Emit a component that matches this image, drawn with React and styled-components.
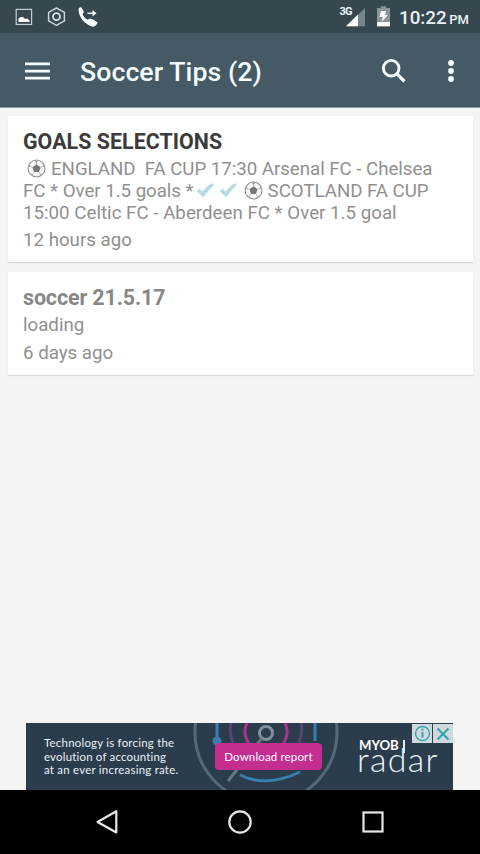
import React from "react";
import styled, { createGlobalStyle } from "styled-components";

const GlobalStyle = createGlobalStyle`
  * { box-sizing: border-box; }
  body { margin: 0; background: #f4f4f4; font-family: Roboto, "Liberation Sans", sans-serif; }
  svg { display: block; flex: none; }
`;

const Screen = styled.div`
  width: 480px;
  height: 854px;
  display: flex;
  flex-direction: column;
  overflow: hidden;
  background: #f4f4f4;
`;

const StatusBar = styled.div`
  height: 33px;
  flex: none;
  display: flex;
  align-items: center;
  justify-content: space-between;
  padding: 0 11px 0 14px;
  background: #37474f;
  color: #e9f1f3;
`;

const StatusGroup = styled.div`
  display: flex;
  align-items: center;
  height: 33px;
`;

const Clock = styled.div`
  display: flex;
  align-items: baseline;
  justify-content: space-between;
  width: 70px;
  margin-left: 9px;
  padding-top: 4px;
  font-size: 18.8px;
  font-weight: 500;
  line-height: 24px;
  white-space: nowrap;
`;

const Meridiem = styled.span`
  font-size: 13px;
`;

const Network = styled.span`
  font-size: 11px;
  font-weight: 700;
  line-height: 12px;
  letter-spacing: -0.6px;
  align-self: flex-start;
  padding-top: 6px;
  margin-right: -6px;
`;

const Battery = styled.svg`
  margin-left: 11px;
`;

const AppBar = styled.header`
  height: 75px;
  flex: none;
  display: flex;
  align-items: center;
  padding: 1px 23px 0 25px;
  background: #455a64;
  border-bottom: 1px solid #8f9ca5;
  color: #f3fbfd;
`;

const Title = styled.h1`
  flex: 1;
  margin: 2px 0 0 30px;
  font-size: 26.7px;
  font-weight: 500;
  line-height: 32px;
  letter-spacing: 0.05px;
  white-space: nowrap;
`;

const Feed = styled.main`
  flex: 1;
  display: flex;
  flex-direction: column;
  gap: 10px;
  padding: 8px 7px 0 8px;
`;

const Card = styled.article`
  height: ${(p) => p.$height}px;
  padding: 12px 15px 0;
  background: #fff;
  border-radius: 1px;
  box-shadow: 0 1px 1px #d3d3d3;
  color: #909090;
  white-space: pre;
`;

const Heading = styled.h2`
  margin: 0 0 2px;
  font-size: 21.4px;
  font-weight: 700;
  line-height: 28px;
  letter-spacing: ${(p) => p.$track || 0}px;
  color: ${(p) => p.$color};
`;

const Line = styled.div`
  display: flex;
  align-items: center;
  height: 22px;
  font-size: 18.7px;
  line-height: 22px;
  letter-spacing: ${(p) => p.$track || 0}px;
`;

const Age = styled(Line)`
  margin-top: ${(p) => p.$gap}px;
`;

const IconSlot = styled.span`
  display: inline-flex;
  margin: 0 ${(p) => p.$right}px 2px ${(p) => p.$left}px;
`;

const Banner = styled.aside`
  position: relative;
  width: 427px;
  height: 67px;
  flex: none;
  margin-left: 26px;
  display: flex;
  background: #2b3c4d;
  color: #fff;
  overflow: hidden;
  font-family: Lato, "Open Sans", sans-serif;
`;

const Rings = styled.svg`
  position: absolute;
  left: 164px;
  top: 0;
`;

const Pitch = styled.p`
  width: 189px;
  flex: none;
  margin: 13px 0 0 18px;
  font-size: 11.4px;
  line-height: 13.6px;
  white-space: nowrap;
  color: #eaf2f7;
`;

const PitchLine = styled.span`
  display: block;
  letter-spacing: ${(p) => p.$track}px;
`;

const Download = styled.div`
  position: relative;
  width: 107px;
  height: 27px;
  flex: none;
  margin: 20px 0 0 -18px;
  display: flex;
  align-items: center;
  justify-content: center;
  border-radius: 4px;
  background: #c62d91;
  font-size: 11.5px;
  letter-spacing: 0.15px;
  white-space: nowrap;
`;

const Brand = styled.div`
  margin: 15px 0 0 37px;
  display: flex;
  flex-direction: column;
`;

const BrandTop = styled.span`
  display: flex;
  align-items: flex-start;
  gap: 4px;
  height: 14px;
  font-size: 13.2px;
  font-weight: 700;
  line-height: 14px;
`;

const Stem = styled.i`
  width: 2px;
  height: 13px;
  margin-top: 2px;
  background: #dfe9ef;
`;

const BrandName = styled.span`
  margin: -3px 0 0 -2px;
  font-size: 34px;
  font-weight: 300;
  line-height: 20px;
  letter-spacing: 1.3px;
  color: #e8f2f8;
`;

const AdChoices = styled.div`
  position: absolute;
  right: 0;
  top: 1px;
  display: flex;
  gap: 1px;
`;

const AdButton = styled.span`
  width: 20px;
  height: 19px;
  display: flex;
  align-items: center;
  justify-content: center;
  background: #cfd9dc;
`;

const NavBar = styled.nav`
  height: 64px;
  flex: none;
  display: flex;
  justify-content: space-between;
  align-items: center;
  padding: 0 95px 0 93px;
  background: #000;
`;

const Ball = () => (
  <svg width="19" height="19" viewBox="0 0 20 20">
    <circle cx="10" cy="10" r="8.9" fill="#fafafa" stroke="#8c8c8c" strokeWidth="1.1" />
    <path d="M10 5.600l4.300 3.100-1.700 5H7.400L5.700 8.700z" fill="#777" />
    <path d="M10 6V3.200M14 8.800l2.800-1M12.500 13.400l1.800 2.500M7.500 13.400l-1.800 2.500M6 8.800l-2.800-1" stroke="#aaa" strokeWidth=".8" />
    <path d="M7 1.600l3 1.700 3-1.700zM1.200 9l2-1.200.2-3zM18.800 9l-2-1.200-.2-3zM4 16.200l2-.2 1.200 2.500zM16 16.200l-2-.2-1.200 2.500z" fill="#999" />
  </svg>
);

const Check = () => (
  <svg width="18" height="15" viewBox="0 0 18 15">
    <path d="M.6 8.200L3.500 5.700l3 2.800C9.200 5 12.500 2.200 16.200.3l1.500 1.900C13.900 5.300 10.700 9.400 7.500 14.400z" fill="#b3dde2" />
  </svg>
);

export default function App() {
  return (
    <>
      <GlobalStyle />
      <Screen>
        <StatusBar>
          <StatusGroup>
            <svg width="90" height="33" viewBox="14 0 90 33" fill="none">
              <rect x="16.200" y="9.400" width="15.400" height="15" stroke="#c3ced2" strokeWidth="1.200" />
              <path d="M18.500 22v-3.500l2.200-1.600 2.500.3 2 1.800 2.200-.4 2 2V22z" fill="#fff" />
              <path d="M56.500 8l7.900 4.300v8.600l-7.900 4.400-7.900-4.400v-8.600z" stroke="#c8d6da" strokeWidth="1.500" strokeLinejoin="round" />
              <circle cx="56.500" cy="16.600" r="3.500" stroke="#d8e3e6" strokeWidth="1.800" />
              <path d="M78.500 9.200c.2-1.400 1.300-2 2.700-1.900 1.700 2 2.700 4 2.500 5.200l-1.200 1.700c1.100 2.400 2.700 4.200 5.200 5.600l2-1.200c2.700.4 5.200 1.800 8 4-.8 2.200-2.200 3.800-4.600 4.200C85.600 25 78.700 18 78.500 9.200z" fill="#f4fbfc" />
              <path d="M87.500 13.300h6" stroke="#f4fbfc" strokeWidth="1.500" />
              <path d="M92.500 10l4 3.300-4 3.300z" fill="#f4fbfc" />
            </svg>
          </StatusGroup>
          <StatusGroup>
            <Network>3G</Network>
            <svg width="20" height="33" viewBox="0 0 20 33">
              <path d="M0 26.200L19 8v18.200z" fill="#75848a" />
              <path d="M0 26.200L12 14.500v11.700z" fill="#fff" />
            </svg>
            <Battery width="13" height="33" viewBox="0 0 13 33">
              <path d="M0 8h3.700V6.200h5.600V8H13v18.300H0z" fill="#87959a" />
              <path d="M0 22h13v4.300H0z" fill="#fff" />
              <path d="M4 11h5l-1 4h3l-6.500 7 1.400-5H2.500z" fill="#fff" />
            </Battery>
            <Clock>10:22<Meridiem>PM</Meridiem></Clock>
          </StatusGroup>
        </StatusBar>
        <AppBar>
          <svg width="25" height="18" viewBox="0 0 25 18">
            <path d="M0 1.900h25M0 9.100h25M0 16.100h25" stroke="currentColor" strokeWidth="2.700" />
          </svg>
          <Title>Soccer Tips (2)</Title>
          <svg width="26" height="26" viewBox="0 0 26 26" fill="none" stroke="currentColor">
            <circle cx="10.200" cy="10.200" r="7.800" strokeWidth="2.900" />
            <path d="M15.700 15.700l7.800 7.800" strokeWidth="3.300" />
          </svg>
          <svg width="50" height="24" viewBox="0 0 50 24" fill="currentColor">
            <circle cx="44" cy="4" r="2.900" />
            <circle cx="44" cy="12" r="2.900" />
            <circle cx="44" cy="20" r="2.900" />
          </svg>
        </AppBar>
        <Feed>
          <Card $height={146}>
            <Heading $color="#3b3b3b" $track={0.04}>GOALS SELECTIONS</Heading>
            <Line $track={-0.03}>
              <IconSlot $left={4} $right={5}><Ball /></IconSlot>
              {"ENGLAND  FA CUP 17:30 Arsenal FC - Chelsea"}
            </Line>
            <Line $track={-0.03}>
              {"FC * Over 1.5 goals *"}
              <IconSlot $left={2} $right={5}><Check /></IconSlot>
              <IconSlot $left={0} $right={7}><Check /></IconSlot>
              <IconSlot $left={0} $right={5}><Ball /></IconSlot>
              {"SCOTLAND FA CUP"}
            </Line>
            <Line $track={0.02}>15:00 Celtic FC - Aberdeen FC * Over 1.5 goal</Line>
            <Age $gap={5}>12 hours ago</Age>
          </Card>
          <Card $height={103}>
            <Heading $color="#878787" $track={-0.1}>soccer 21.5.17</Heading>
            <Line>loading</Line>
            <Age $gap={6}>6 days ago</Age>
          </Card>
        </Feed>
        <Banner>
          <Rings width="152" height="67" viewBox="190 723 152 67" fill="none">
            <circle cx="266" cy="732" r="71" stroke="#566978" strokeWidth="3" />
            <path d="M217 723v18M315 723v18M240 775q26 13 60-3" stroke="#377fae" strokeWidth="3" />
            <path d="M231 723q-2 10 2 20M301 723q2 10-2 20" stroke="#544573" strokeWidth="3" />
            <path d="M247 723q-5 10 2 21M285 723q5 10-2 21" stroke="#a83788" strokeWidth="3" />
            <circle cx="266" cy="733" r="6.500" stroke="#82909a" strokeWidth="3" />
            <path d="M262 738l-34 43" stroke="#667886" strokeWidth="3" />
            <circle cx="217" cy="741" r="4.500" fill="#377fae" />
          </Rings>
          <Pitch>
            <PitchLine $track={0.25}>Technology is forcing the</PitchLine>
            <PitchLine $track={0.22}>evolution of accounting</PitchLine>
            <PitchLine $track={0.26}>at an ever increasing rate.</PitchLine>
          </Pitch>
          <Download>Download report</Download>
          <Brand>
            <BrandTop>MYOB<Stem /></BrandTop>
            <BrandName>radar</BrandName>
          </Brand>
          <AdChoices>
            <AdButton>
              <svg width="17" height="17" viewBox="0 0 17 17" fill="none" stroke="#36a5ae">
                <circle cx="8.500" cy="8.500" r="7" strokeWidth="1.400" />
                <path d="M8.500 7v5.500M8.500 3.800v2" strokeWidth="2" />
              </svg>
            </AdButton>
            <AdButton>
              <svg width="14" height="14" viewBox="0 0 14 14">
                <path d="M1.500 1.500l11 11M12.500 1.500l-11 11" stroke="#36a5ae" strokeWidth="2.200" />
              </svg>
            </AdButton>
          </AdChoices>
        </Banner>
        <NavBar>
          <svg width="26" height="28" viewBox="0 0 26 28">
            <path d="M23.300 3.200v21.300L4.500 14z" fill="none" stroke="#e8e8e8" strokeWidth="2.200" strokeLinejoin="round" />
          </svg>
          <svg width="26" height="26" viewBox="0 0 26 26">
            <circle cx="13" cy="13" r="10.700" fill="none" stroke="#e8e8e8" strokeWidth="2.200" />
          </svg>
          <svg width="24" height="24" viewBox="0 0 24 24">
            <rect x="2.500" y="2.500" width="19" height="19" fill="none" stroke="#e8e8e8" strokeWidth="2.200" />
          </svg>
        </NavBar>
      </Screen>
    </>
  );
}
